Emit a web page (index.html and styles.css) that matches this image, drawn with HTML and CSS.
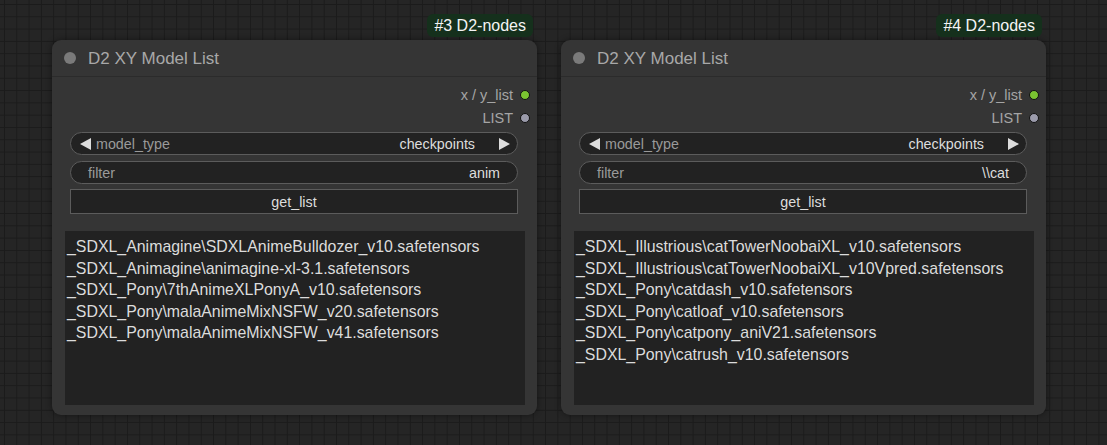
FILE: index.html
```html
<!DOCTYPE html>
<html>
<head>
<meta charset="utf-8">
<link rel="stylesheet" href="styles.css">
</head>
<body>
<div class="canvas">
  <div class="node node-a">
    <div class="badge">#3 D2-nodes</div>
    <div class="node-header">
      <span class="status-dot"></span>
      <span class="node-title">D2 XY Model List</span>
    </div>
    <div class="node-body">
      <div class="output-row"><span class="output-label">x / y_list</span><span class="slot slot-green"></span></div>
      <div class="output-row"><span class="output-label">LIST</span><span class="slot slot-grey"></span></div>
      <div class="widget combo">
        <span class="arrow arrow-left"></span>
        <span class="w-label">model_type</span>
        <span class="w-value">checkpoints</span>
        <span class="arrow arrow-right"></span>
      </div>
      <div class="widget text">
        <span class="w-label">filter</span>
        <span class="w-value">anim</span>
      </div>
      <div class="button">get_list</div>
      <div class="textarea">
        <div>_SDXL_Animagine\SDXLAnimeBulldozer_v10.safetensors</div>
        <div>_SDXL_Animagine\animagine-xl-3.1.safetensors</div>
        <div>_SDXL_Pony\7thAnimeXLPonyA_v10.safetensors</div>
        <div>_SDXL_Pony\malaAnimeMixNSFW_v20.safetensors</div>
        <div>_SDXL_Pony\malaAnimeMixNSFW_v41.safetensors</div>
      </div>
    </div>
  </div>

  <div class="node node-b">
    <div class="badge">#4 D2-nodes</div>
    <div class="node-header">
      <span class="status-dot"></span>
      <span class="node-title">D2 XY Model List</span>
    </div>
    <div class="node-body">
      <div class="output-row"><span class="output-label">x / y_list</span><span class="slot slot-green"></span></div>
      <div class="output-row"><span class="output-label">LIST</span><span class="slot slot-grey"></span></div>
      <div class="widget combo">
        <span class="arrow arrow-left"></span>
        <span class="w-label">model_type</span>
        <span class="w-value">checkpoints</span>
        <span class="arrow arrow-right"></span>
      </div>
      <div class="widget text">
        <span class="w-label">filter</span>
        <span class="w-value">\\cat</span>
      </div>
      <div class="button">get_list</div>
      <div class="textarea">
        <div>_SDXL_Illustrious\catTowerNoobaiXL_v10.safetensors</div>
        <div>_SDXL_Illustrious\catTowerNoobaiXL_v10Vpred.safetensors</div>
        <div>_SDXL_Pony\catdash_v10.safetensors</div>
        <div>_SDXL_Pony\catloaf_v10.safetensors</div>
        <div>_SDXL_Pony\catpony_aniV21.safetensors</div>
        <div>_SDXL_Pony\catrush_v10.safetensors</div>
      </div>
    </div>
  </div>
</div>
</body>
</html>
```

FILE: styles.css
```css
* { box-sizing: border-box; }
html, body {
  margin: 0;
  padding: 0;
  width: 1107px;
  height: 445px;
  overflow: hidden;
}
body {
  background-color: #252525;
  background-image:
    linear-gradient(to right, #1b1b1b 1px, transparent 1px),
    linear-gradient(to bottom, #1b1b1b 1px, transparent 1px);
  background-size: 12.3px 12.3px;
  background-position: 4px 4px;
  font-family: "Liberation Sans", Arial, sans-serif;
}
.canvas {
  position: relative;
  width: 1107px;
  height: 445px;
}
.node {
  position: absolute;
  top: 40px;
  width: 485px;
  height: 375px;
  background: #353535;
  border-radius: 9px;
  box-shadow: 0 0 6px rgba(0,0,0,0.45);
  display: flex;
  flex-direction: column;
}
.node-a { left: 52px; }
.node-b { left: 561px; }
.badge {
  position: absolute;
  top: -26px;
  right: 4px;
  height: 23px;
  padding: 0 7px;
  background: #15301c;
  color: #f4f4f4;
  font-size: 16px;
  line-height: 23px;
  border-radius: 6px;
  white-space: nowrap;
}
.node-header {
  height: 37px;
  display: flex;
  align-items: center;
  padding: 2px 0 0 12px;
  border-bottom: 1px solid #2b2b2b;
  flex: none;
}
.status-dot {
  width: 12px;
  height: 12px;
  border-radius: 50%;
  background: #7a7a7a;
  margin-right: 12px;
  margin-top: -2px;
}
.node-title {
  color: #a8a8a8;
  font-size: 17px;
}
.node-body {
  flex: 1;
  display: flex;
  flex-direction: column;
  padding: 6px 0 10px 0;
}
.output-row {
  height: 23px;
  display: flex;
  align-items: center;
  justify-content: flex-end;
  padding-right: 7px;
}
.output-label {
  color: #a5a5a5;
  font-size: 14.5px;
  margin-right: 7px;
}
.slot {
  width: 10px;
  height: 10px;
  border-radius: 50%;
  border: 1px solid #111;
}
.slot-green { background: #7ac431; }
.slot-grey { background: #9b9bab; }
.widget {
  margin: 3px 19px 0 18px;
  height: 23px;
  border-radius: 12px;
  background: #222222;
  border: 1px solid #5c5c5c;
  display: flex;
  align-items: center;
  font-size: 14.3px;
  padding: 0 17px;
}
.widget.text { margin-top: 6px; }
.widget.combo { padding: 0 7px 0 9px; }
.w-label {
  color: #9a9a9a;
  flex: 1;
}
.w-value {
  color: #dddddd;
}
.arrow {
  width: 0;
  height: 0;
  border-top: 6px solid transparent;
  border-bottom: 6px solid transparent;
}
.arrow-left {
  border-right: 11px solid #dddddd;
  margin-right: 5px;
}
.arrow-right {
  border-left: 11px solid #dddddd;
  margin-left: 24px;
}
.button {
  margin: 5px 19px 0 18px;
  height: 25px;
  background: #222222;
  border: 1px solid #5c5c5c;
  color: #dddddd;
  font-size: 14.3px;
  display: flex;
  align-items: center;
  justify-content: center;
}
.textarea {
  margin: 17px 12px 0 13px;
  flex: 1;
  background: #222222;
  color: #dcdcdc;
  font-size: 15.9px;
  line-height: 21.6px;
  padding: 5px 2px;
  overflow: hidden;
  white-space: nowrap;
}
```
